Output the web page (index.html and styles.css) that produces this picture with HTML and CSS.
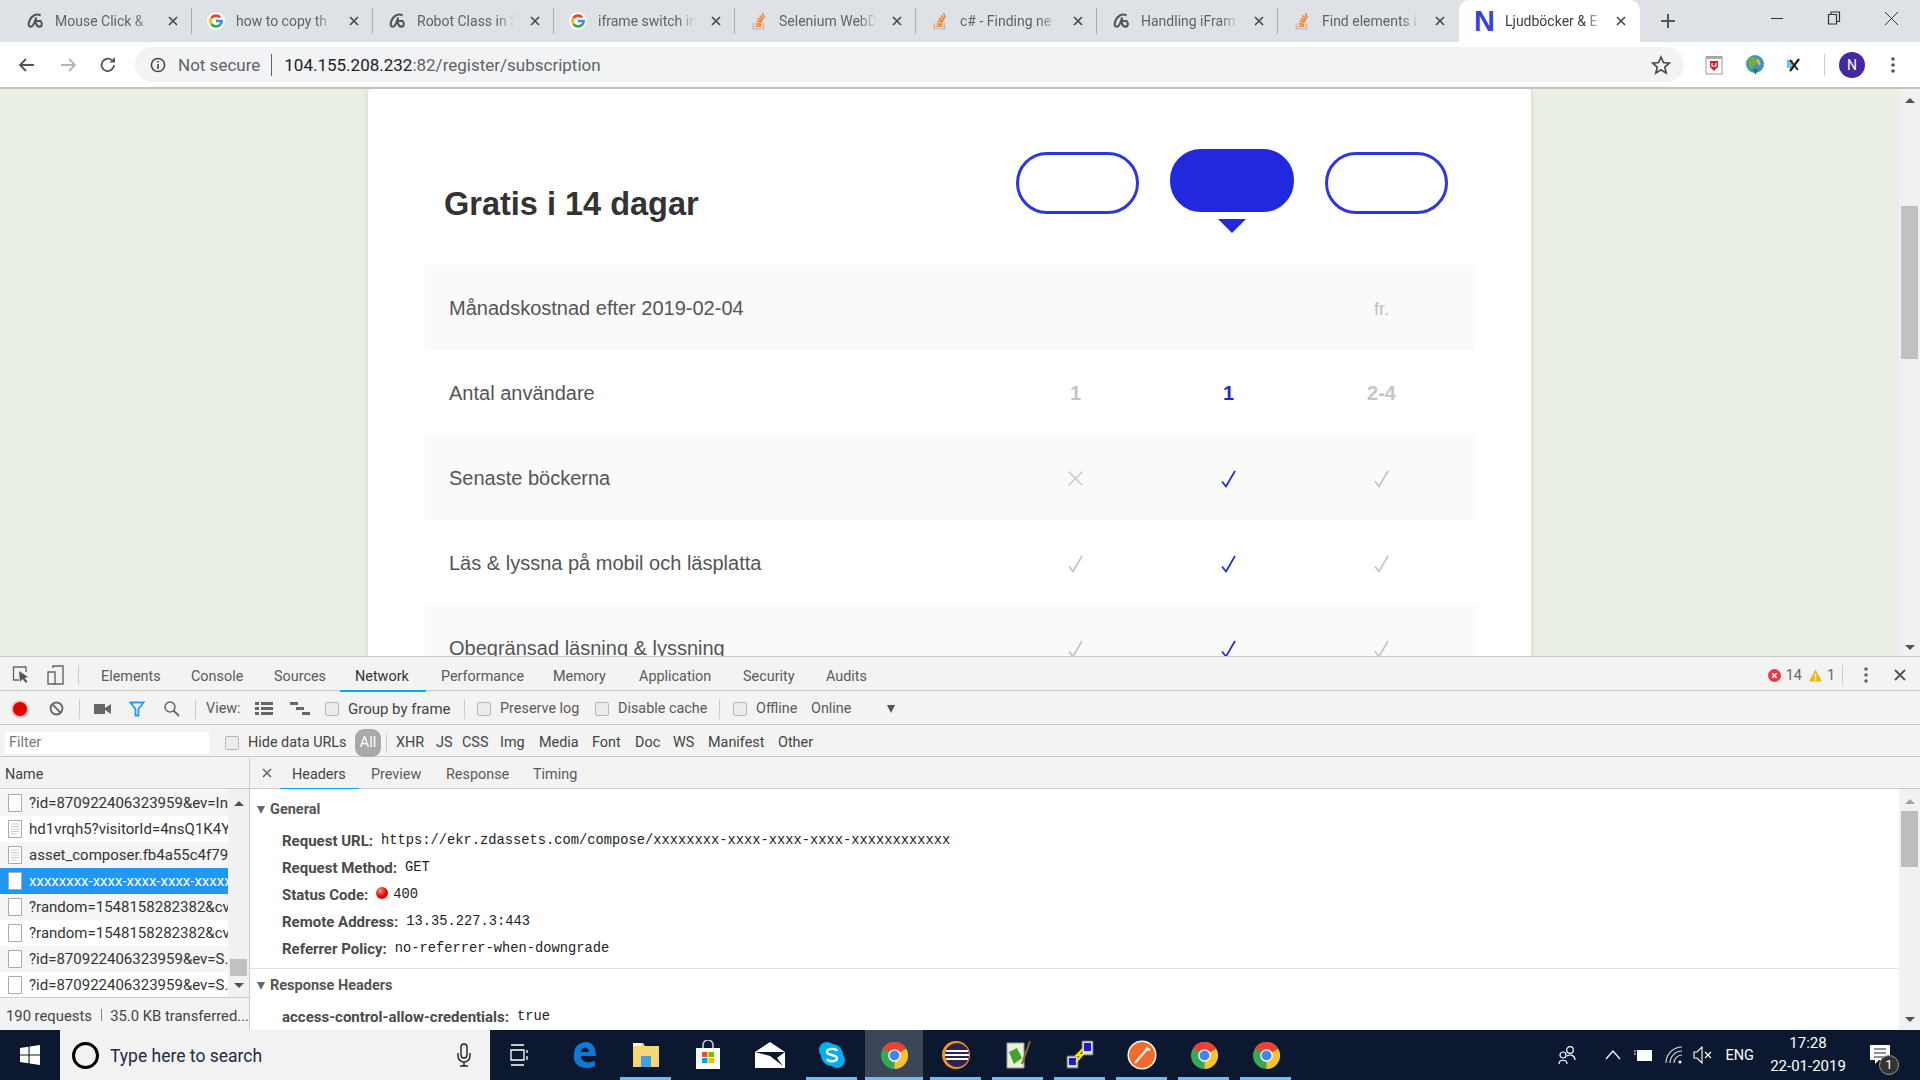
FILE: index.html
```html
<!DOCTYPE html>
<html lang="en">
<head>
    <meta charset="UTF-8">
    <title>Ljudböcker &amp; E-böcker</title>
    <link rel="stylesheet" href="styles.css">
</head>
<body>
    <!-- Shared icons -->
    <svg class="defs" width="0" height="0">
        <symbol id="i-swirl" viewBox="0 0 16 16"><path d="M13 3 C9 1 5 3 3 8 C1 13 4 14 6 12 C8 10 8 7 9 5 C8 9 9 13 12 13 C14.500 13 14.500 10 13 8 H9.500" fill="none" stroke="#555" stroke-width="1.8"/></symbol>
        <symbol id="i-google" viewBox="0 0 16 16">
            <circle cx="8" cy="8" r="8" fill="#fff"/>
            <path d="M11.6 4.8 A5 5 0 0 0 3.9 5.4" fill="none" stroke="#ea4335" stroke-width="2.4"/>
            <path d="M3.9 5.4 A5 5 0 0 0 3.9 10.6" fill="none" stroke="#fbbc05" stroke-width="2.4"/>
            <path d="M3.9 10.6 A5 5 0 0 0 11.8 11.2" fill="none" stroke="#34a853" stroke-width="2.4"/>
            <path d="M8 8 H13 A5 5 0 0 1 11.8 11.2" fill="none" stroke="#4285f4" stroke-width="2.4"/>
        </symbol>
        <symbol id="i-stack" viewBox="0 0 16 16">
            <path d="M3 10 V15 H12 V10" fill="none" stroke="#bbb" stroke-width="1.3"/>
            <path d="M5 12.6 H10 M5.2 10.4 L10 11 M5.9 8 L10.4 9.2 M7 5.6 L11 8 M8.8 3.2 L11.8 6.8 M11.2 1 L12.6 5.4" stroke="#f48024" stroke-width="1.4" fill="none"/>
        </symbol>
        <symbol id="i-close" viewBox="0 0 10 10"><path d="M1 1 L9 9 M9 1 L1 9" stroke="#4a4a4a" stroke-width="1.7" fill="none"/></symbol>
        <symbol id="i-check" viewBox="0 0 15 18"><path d="M1 11.5 L5 16.5 L14 1" fill="none" stroke="currentColor" stroke-width="1.7"/></symbol>
        <symbol id="i-cross" viewBox="0 0 15 15"><path d="M.5 .5 L14.5 14.5 M14.5 .5 L.5 14.5" fill="none" stroke="currentColor" stroke-width="1.3"/></symbol>
        <symbol id="i-chrome" viewBox="0 0 24 24">
            <circle cx="12" cy="12" r="12" fill="#34a853"/>
            <path d="M12 12 L1.6 6 A12 12 0 0 1 22.4 6 Z" fill="#ea4335"/>
            <path d="M12 12 L22.4 6 A12 12 0 0 1 12 24 Z" fill="#fbc02d"/>
            <circle cx="12" cy="12" r="5.6" fill="#fff"/>
            <circle cx="12" cy="12" r="4.4" fill="#4285f4"/>
        </symbol>
        <symbol id="i-doc" viewBox="0 0 14 18"><path d="M.5 .5 H13.5 V17.5 H.5 Z" fill="#fff" stroke="#aaa"/></symbol>
        <symbol id="i-doc-lines" viewBox="0 0 14 18"><path d="M.5 .5 H13.5 V17.5 H.5 Z" fill="#fff" stroke="#aaa"/><path d="M3 4 H11 M3 6.5 H11 M3 9 H11 M3 11.5 H11 M3 14 H8" stroke="#ccc"/></symbol>
    </svg>

    <!-- Browser tabs -->
    <div class="tab-strip">
        <div class="tab"><svg class="fav" width="18" height="18"><use href="#i-swirl"/></svg><span class="tab-title">Mouse Click &amp;</span><svg class="tab-x" width="10" height="10"><use href="#i-close"/></svg></div>
        <div class="tab"><svg class="fav" width="18" height="18"><use href="#i-google"/></svg><span class="tab-title">how to copy th</span><svg class="tab-x" width="10" height="10"><use href="#i-close"/></svg></div>
        <div class="tab"><svg class="fav" width="18" height="18"><use href="#i-swirl"/></svg><span class="tab-title">Robot Class in S</span><svg class="tab-x" width="10" height="10"><use href="#i-close"/></svg></div>
        <div class="tab"><svg class="fav" width="18" height="18"><use href="#i-google"/></svg><span class="tab-title">iframe switch in</span><svg class="tab-x" width="10" height="10"><use href="#i-close"/></svg></div>
        <div class="tab"><svg class="fav" width="18" height="18"><use href="#i-stack"/></svg><span class="tab-title">Selenium WebD</span><svg class="tab-x" width="10" height="10"><use href="#i-close"/></svg></div>
        <div class="tab"><svg class="fav" width="18" height="18"><use href="#i-stack"/></svg><span class="tab-title">c# - Finding ne</span><svg class="tab-x" width="10" height="10"><use href="#i-close"/></svg></div>
        <div class="tab"><svg class="fav" width="18" height="18"><use href="#i-swirl"/></svg><span class="tab-title">Handling iFram</span><svg class="tab-x" width="10" height="10"><use href="#i-close"/></svg></div>
        <div class="tab tab-last"><svg class="fav" width="18" height="18"><use href="#i-stack"/></svg><span class="tab-title">Find elements i</span><svg class="tab-x" width="10" height="10"><use href="#i-close"/></svg></div>
        <div class="tab tab-active"><span class="fav-n">N</span><span class="tab-title">Ljudböcker &amp; E</span><svg class="tab-x" width="10" height="10"><use href="#i-close"/></svg></div>
        <div class="new-tab"><svg width="16" height="16" viewBox="0 0 16 16"><path d="M8 1 V15 M1 8 H15" stroke="#555" stroke-width="2"/></svg></div>
        <div class="win-controls">
            <svg width="14" height="14" viewBox="0 0 14 14"><path d="M1 7.5 H13" stroke="#333"/></svg>
            <svg width="14" height="14" viewBox="0 0 14 14"><path d="M1.5 3.500 H9.5 V13 H1.5 Z M4 3.500 V1 H12.5 V10.500 H9.5" fill="none" stroke="#333" stroke-width="1.2"/></svg>
            <svg width="15" height="15" viewBox="0 0 15 15"><path d="M1 1 L14 14 M14 1 L1 14" stroke="#333"/></svg>
        </div>
    </div>

    <!-- Address bar -->
    <div class="toolbar">
        <div class="nav-buttons">
            <svg width="18" height="16" viewBox="0 0 18 16"><path d="M16 8 H2 M8 2 L2 8 L8 14" fill="none" stroke="#555" stroke-width="1.8"/></svg>
            <svg width="18" height="16" viewBox="0 0 18 16"><path d="M2 8 H16 M10 2 L16 8 L10 14" fill="none" stroke="#b5b5b5" stroke-width="1.8"/></svg>
            <svg width="18" height="18" viewBox="0 0 18 18"><path d="M15 9 A6.2 6.2 0 1 1 13 4.3" fill="none" stroke="#555" stroke-width="1.8"/><path d="M10.5 6.5 H16 V1 Z" fill="#555"/></svg>
        </div>
        <div class="omnibox">
            <svg class="info-icon" width="16" height="16" viewBox="0 0 16 16"><circle cx="8" cy="8" r="6.6" fill="none" stroke="#444" stroke-width="1.5"/><path d="M8 7 V12 M8 4 V5.6" stroke="#444" stroke-width="1.6"/></svg>
            <span class="not-secure">Not secure</span>
            <span class="url"><b>104.155.208.232</b>:82/register/subscription</span>
            <svg class="star" width="20" height="20" viewBox="0 0 20 20"><path d="M10 2 L12.4 7.6 L18.4 8.1 L13.8 12.1 L15.2 18 L10 14.9 L4.8 18 L6.2 12.1 L1.6 8.1 L7.6 7.6 Z" fill="none" stroke="#444" stroke-width="1.6"/></svg>
        </div>
        <div class="extensions">
            <svg class="ext-shield" width="20" height="20" viewBox="0 0 20 20"><path d="M2 1.5 H18 V19 H2 Z" fill="#fff" stroke="#999"/><path d="M2 1.5 H18 V4 H2 Z" fill="#aaa"/><path d="M6 6 H14 V12 L10 16 L6 12 Z" fill="#c62828"/><path d="M8 8 V11 H12 V8" fill="none" stroke="#fff" stroke-width="1.2"/></svg>
            <svg class="ext-globe" width="20" height="22" viewBox="0 0 20 22"><circle cx="10" cy="10" r="9" fill="#3f8fd2"/><path d="M3 5 C7 1 12 3 13 8 C10 9 8 15 5 16 Z" fill="#6bb33a"/><path d="M12 4 C15 6 16 9 15 12 L12 9 Z" fill="#f0b429"/><path d="M8 15 H13 L10.5 21 Z" fill="#2e7d32"/></svg>
            <svg class="ext-x" width="18" height="16" viewBox="0 0 18 16"><path d="M2 3 H8 V11 H2" fill="#6fc3ea"/><path d="M5 14 L14 2" stroke="#222" stroke-width="2.4"/><path d="M5 3 L13 13" stroke="#222" stroke-width="2"/></svg>
            <span class="toolbar-sep"></span>
            <span class="avatar">N</span>
            <svg class="dots" width="4" height="16" viewBox="0 0 4 16"><circle cx="2" cy="2" r="1.8" fill="#555"/><circle cx="2" cy="8" r="1.8" fill="#555"/><circle cx="2" cy="14" r="1.8" fill="#555"/></svg>
        </div>
    </div>

    <!-- Page -->
    <div class="viewport">
        <div class="page">
            <div class="card">
                <div class="card-head">
                    <h1>Gratis i 14 dagar</h1>
                    <div class="plans">
                        <div class="plan"></div>
                        <div class="plan plan-active"></div>
                        <div class="plan"></div>
                    </div>
                </div>
                <div class="row">
                    <span class="row-label">Månadskostnad efter 2019-02-04</span>
                    <span class="cell"></span>
                    <span class="cell"></span>
                    <span class="cell cell-fr">fr.</span>
                </div>
                <div class="row">
                    <span class="row-label">Antal användare</span>
                    <span class="cell cell-num">1</span>
                    <span class="cell cell-num cell-on">1</span>
                    <span class="cell cell-num">2-4</span>
                </div>
                <div class="row">
                    <span class="row-label">Senaste böckerna</span>
                    <span class="cell"><svg width="15" height="15"><use href="#i-cross"/></svg></span>
                    <span class="cell cell-on"><svg width="15" height="18"><use href="#i-check"/></svg></span>
                    <span class="cell"><svg width="15" height="18"><use href="#i-check"/></svg></span>
                </div>
                <div class="row">
                    <span class="row-label">Läs &amp; lyssna på mobil och läsplatta</span>
                    <span class="cell"><svg width="15" height="18"><use href="#i-check"/></svg></span>
                    <span class="cell cell-on"><svg width="15" height="18"><use href="#i-check"/></svg></span>
                    <span class="cell"><svg width="15" height="18"><use href="#i-check"/></svg></span>
                </div>
                <div class="row">
                    <span class="row-label">Obegränsad läsning &amp; lyssning</span>
                    <span class="cell"><svg width="15" height="18"><use href="#i-check"/></svg></span>
                    <span class="cell cell-on"><svg width="15" height="18"><use href="#i-check"/></svg></span>
                    <span class="cell"><svg width="15" height="18"><use href="#i-check"/></svg></span>
                </div>
            </div>
        </div>
        <div class="scrollbar page-scroll">
            <span class="arrow-up"></span>
            <span class="page-thumb"></span>
            <span class="arrow-down"></span>
        </div>
    </div>

    <!-- DevTools -->
    <div class="devtools">
        <div class="dt-tabs">
            <div class="dt-tools">
                <svg width="18" height="20" viewBox="0 0 18 20"><path d="M7 15 H1.5 V2 H14 V7" fill="none" stroke="#666" stroke-width="1.3"/><path d="M7 6 L8 17 L10.5 14 L14 18 L15.5 16.5 L12.5 13 L16 12 Z" fill="#555"/></svg>
                <svg width="18" height="20" viewBox="0 0 18 20"><path d="M6 3 V1 H16 V19 H6" fill="none" stroke="#666" stroke-width="1.4"/><path d="M1 7 H8 V19 H1 Z" fill="none" stroke="#666" stroke-width="1.4"/></svg>
                <span class="dt-sep"></span>
            </div>
            <div class="dt-tab-list">
                <span class="dt-tab">Elements</span>
                <span class="dt-tab">Console</span>
                <span class="dt-tab">Sources</span>
                <span class="dt-tab dt-tab-on">Network</span>
                <span class="dt-tab">Performance</span>
                <span class="dt-tab">Memory</span>
                <span class="dt-tab">Application</span>
                <span class="dt-tab">Security</span>
                <span class="dt-tab">Audits</span>
            </div>
            <div class="dt-status">
                <svg width="13" height="13" viewBox="0 0 13 13"><circle cx="6.5" cy="6.5" r="6.5" fill="#e53c46"/><path d="M4.3 4.3 L8.7 8.7 M8.7 4.3 L4.3 8.7" stroke="#fff" stroke-width="1.6"/></svg>
                <span class="dt-count">14</span>
                <svg width="13" height="13" viewBox="0 0 13 13"><path d="M6.5 .5 L13 12.5 H0 Z" fill="#f2b50f"/><path d="M6.5 4.5 V9 M6.5 10 V11.5" stroke="#fff" stroke-width="1.5"/></svg>
                <span class="dt-count">1</span>
                <span class="dt-sep"></span>
                <svg class="dt-more" width="4" height="16" viewBox="0 0 4 16"><circle cx="2" cy="2" r="1.8" fill="#666"/><circle cx="2" cy="8" r="1.8" fill="#666"/><circle cx="2" cy="14" r="1.8" fill="#666"/></svg>
                <svg class="dt-close" width="12" height="12" viewBox="0 0 12 12"><path d="M1 1 L11 11 M11 1 L1 11" stroke="#555" stroke-width="1.9"/></svg>
            </div>
        </div>

        <div class="net-bar">
            <span class="net-cell"><span class="record"></span></span>
            <span class="net-cell"><svg width="15" height="15" viewBox="0 0 15 15"><circle cx="7.5" cy="7.5" r="6" fill="none" stroke="#666" stroke-width="1.8"/><path d="M3.4 3.4 L11.6 11.6" stroke="#666" stroke-width="1.8"/></svg></span>
            <span class="net-cell"><span class="dt-sep"></span></span>
            <span class="net-cell"><svg width="17" height="12" viewBox="0 0 17 12"><path d="M0 1 H11 V11 H0 Z M11 5 L17 1 V11 L11 7 Z" fill="#666"/></svg></span>
            <span class="net-cell"><svg width="16" height="16" viewBox="0 0 16 16"><path d="M1.5 1.5 H14.5 L9.5 8 V14.5 H6.5 V8 Z" fill="none" stroke="#1f9bea" stroke-width="1.8"/></svg></span>
            <span class="net-cell"><svg width="17" height="17" viewBox="0 0 17 17"><circle cx="7" cy="7" r="5" fill="none" stroke="#666" stroke-width="1.5"/><path d="M10.5 10.5 L16 16" stroke="#666" stroke-width="1.8"/></svg></span>
            <span class="net-cell"><span class="dt-sep"></span></span>
            <span class="net-text">View:</span>
            <span class="net-cell"><svg width="18" height="13" viewBox="0 0 18 13"><path d="M0 0 H4 V3 H0 Z M6 0 H18 V3 H6 Z M0 5 H4 V8 H0 Z M6 5 H18 V8 H6 Z M0 10 H4 V13 H0 Z M6 10 H18 V13 H6 Z" fill="#666"/></svg></span>
            <span class="net-cell"><svg width="20" height="13" viewBox="0 0 20 13"><path d="M0 0 H8 V3 H0 Z M6 5 H14 V8 H6 Z M12 10 H20 V13 H12 Z" fill="#666"/></svg></span>
            <label class="check check-group"><span class="box"></span>Group by frame</label>
            <span class="net-cell"><span class="dt-sep"></span></span>
            <label class="check check-preserve"><span class="box"></span>Preserve log</label>
            <label class="check"><span class="box"></span>Disable cache</label>
            <span class="net-cell"><span class="dt-sep"></span></span>
            <label class="check check-offline"><span class="box"></span>Offline</label>
            <span class="net-online">Online</span>
            <span class="net-caret"></span>
        </div>

        <div class="filter-bar">
            <span class="filter-input">Filter</span>
            <label class="check check-hide"><span class="box"></span>Hide data URLs</label>
            <span class="filter-all">All</span>
            <span class="filter-sep"></span>
            <div class="filter-types">
                <span>XHR</span><span>JS</span><span>CSS</span><span>Img</span><span>Media</span><span>Font</span><span>Doc</span><span>WS</span><span>Manifest</span><span>Other</span>
            </div>
        </div>

        <div class="net-main">
            <div class="req-pane">
                <div class="req-head">Name</div>
                <div class="req-body">
                    <div class="req-list">
                        <div class="req"><svg width="14" height="18"><use href="#i-doc"/></svg><span>?id=870922406323959&amp;ev=In</span></div>
                        <div class="req"><svg width="14" height="18"><use href="#i-doc-lines"/></svg><span>hd1vrqh5?visitorId=4nsQ1K4Y</span></div>
                        <div class="req"><svg width="14" height="18"><use href="#i-doc-lines"/></svg><span>asset_composer.fb4a55c4f794.</span></div>
                        <div class="req req-on"><svg width="14" height="18"><use href="#i-doc"/></svg><span>xxxxxxxx-xxxx-xxxx-xxxx-xxxxxx</span></div>
                        <div class="req"><svg width="14" height="18"><use href="#i-doc"/></svg><span>?random=1548158282382&amp;cv</span></div>
                        <div class="req"><svg width="14" height="18"><use href="#i-doc"/></svg><span>?random=1548158282382&amp;cv</span></div>
                        <div class="req"><svg width="14" height="18"><use href="#i-doc"/></svg><span>?id=870922406323959&amp;ev=S.</span></div>
                        <div class="req"><svg width="14" height="18"><use href="#i-doc"/></svg><span>?id=870922406323959&amp;ev=S.</span></div>
                    </div>
                    <div class="scrollbar req-scroll">
                        <span class="arrow-up"></span>
                        <span class="req-thumb"></span>
                        <span class="arrow-down"></span>
                    </div>
                </div>
                <div class="req-foot">190 requests <i></i> 35.0 KB transferred...</div>
            </div>
            <div class="detail-pane">
                <div class="detail-tabs">
                    <svg class="detail-x" width="10" height="10" viewBox="0 0 10 10"><path d="M1 1 L9 9 M9 1 L1 9" stroke="#666" stroke-width="1.6"/></svg>
                    <div class="detail-tab-list">
                        <span class="detail-tab detail-tab-on">Headers</span>
                        <span class="detail-tab">Preview</span>
                        <span class="detail-tab">Response</span>
                        <span class="detail-tab">Timing</span>
                    </div>
                </div>
                <div class="detail-body">
                    <div class="detail-scrollarea">
                        <div class="section">
                            <div class="section-title">General</div>
                            <div class="kv"><b>Request URL:</b><code>https://ekr.zdassets.com/compose/xxxxxxxx-xxxx-xxxx-xxxx-xxxxxxxxxxxx</code></div>
                            <div class="kv"><b>Request Method:</b><code>GET</code></div>
                            <div class="kv"><b>Status Code:</b><span class="status-dot"></span><code>400</code></div>
                            <div class="kv"><b>Remote Address:</b><code>13.35.227.3:443</code></div>
                            <div class="kv"><b>Referrer Policy:</b><code>no-referrer-when-downgrade</code></div>
                        </div>
                        <div class="section section-next">
                            <div class="section-title">Response Headers</div>
                            <div class="kv kv-first"><b>access-control-allow-credentials:</b><code>true</code></div>
                        </div>
                    </div>
                    <div class="scrollbar detail-scroll">
                        <span class="arrow-up"></span>
                        <span class="detail-thumb"></span>
                        <span class="arrow-down"></span>
                    </div>
                </div>
            </div>
        </div>
    </div>

    <!-- Windows taskbar -->
    <div class="taskbar">
        <div class="start"><svg width="20" height="20" viewBox="0 0 20 20"><path d="M0 3 L8.5 1.8 V9.4 H0 Z M9.6 1.6 L20 0 V9.4 H9.6 Z M0 10.6 H8.5 V18.2 L0 17 Z M9.6 10.6 H20 V20 L9.6 18.4 Z" fill="#fff"/></svg></div>
        <div class="search">
            <span class="cortana"></span>
            <span class="search-text">Type here to search</span>
            <svg class="mic" width="16" height="24" viewBox="0 0 16 24"><rect x="5" y="1" width="6" height="14" rx="3" fill="none" stroke="#222" stroke-width="1.4"/><path d="M2 10 V13 A6 6 0 0 0 14 13 V10 M8 19 V23 M4 23 H12" fill="none" stroke="#222" stroke-width="1.4"/></svg>
        </div>
        <div class="task-apps">
            <span class="app app-plain"><svg class="task-view" width="20" height="22" viewBox="0 0 20 22"><path d="M3 1 H16 M3 21 H16 M3 6 H16 V16 H3 Z M19 6 V9 M19 12 V16" fill="none" stroke="#fff" stroke-width="1.3"/></svg></span>
            <span class="app app-plain"><svg width="26" height="28" viewBox="0 0 26 28"><path d="M3 13 C3 5 9 1 15 1 C21 1 25 6 25 15 H10 C10 21 17 23 24 20 V25 C14 30 1 26 3 13 Z M10 11 H18 C18 6 11 5 10 11 Z" fill="#0f78d4"/></svg></span>
            <span class="app"><svg width="28" height="26" viewBox="0 0 28 26"><path d="M1 1 H11 L13 4 H27 V25 H1 Z" fill="#f7d774"/><path d="M9 14 H19 V25 H9 Z" fill="#3fa2e0"/><path d="M1 1 H9 V4 H1 Z" fill="#fff"/></svg></span>
            <span class="app app-plain"><svg width="30" height="30" viewBox="0 0 30 30"><path d="M10 8 V5 A5 5 0 0 1 20 5 V8" fill="none" stroke="#ccc" stroke-width="1.6"/><path d="M3 8 H27 V29 H3 Z" fill="#fff"/><path d="M9 12 H14.500 V17 H9 Z" fill="#f25022"/><path d="M15.500 12 H21 V17 H15.500 Z" fill="#7fba00"/><path d="M9 18 H14.500 V23 H9 Z" fill="#00a4ef"/><path d="M15.500 18 H21 V23 H15.500 Z" fill="#ffb900"/></svg></span>
            <span class="app app-plain"><svg width="30" height="26" viewBox="0 0 30 26"><path d="M0 10 L15 0 L30 10 V26 H0 Z" fill="#fff"/><path d="M0 10 L30 10 L22 16 L28 24 L15 14 Z" fill="#0c1830"/></svg></span>
            <span class="app"><svg width="28" height="28" viewBox="0 0 28 28"><circle cx="9" cy="9" r="8" fill="#00aff0"/><circle cx="19" cy="19" r="8" fill="#00aff0"/><circle cx="14" cy="14" r="11" fill="#00aff0"/><path d="M19 10 C18 7 9 7 9 11 C9 15 19 13 19 17.500 C19 21 10 21 9 18" fill="none" stroke="#fff" stroke-width="2.4"/></svg></span>
            <span class="app app-active"><svg width="27" height="27"><use href="#i-chrome"/></svg></span>
            <span class="app"><svg width="28" height="28" viewBox="0 0 28 28"><circle cx="14" cy="14" r="14" fill="#f7941e"/><circle cx="15" cy="14" r="12" fill="#2c2255"/><path d="M4 10 H26 M3 14 H27 M4 18 H26" stroke="#fff" stroke-width="2"/></svg></span>
            <span class="app"><svg width="26" height="30" viewBox="0 0 26 30"><path d="M2 3 H19 V28 H2 Z" fill="#e8f0d8" stroke="#999"/><path d="M4 12 L12 8 L17 18 L9 24 Z" fill="#4aa02c"/><path d="M17 24 L25 1" stroke="#8a6d1f" stroke-width="2"/></svg></span>
            <span class="app"><svg width="30" height="30" viewBox="0 0 30 30"><path d="M17 1 H28 V15 H17 Z" fill="#dde" stroke="#666"/><path d="M19 3 H26 V11 H19 Z" fill="#1a1ac8"/><path d="M2 16 H13 V28 H2 Z" fill="#dde" stroke="#666"/><path d="M4 18 H11 V25 H4 Z" fill="#1a1ac8"/><path d="M18 9 L12 15 H17 L11 22" fill="none" stroke="#ffe100" stroke-width="2.4"/></svg></span>
            <span class="app"><svg width="30" height="30" viewBox="0 0 30 30"><circle cx="15" cy="15" r="14.500" fill="#fff"/><circle cx="15" cy="15" r="13" fill="#f26b2d"/><path d="M8 23 L21 8 M19 8 L23 10" stroke="#fff" stroke-width="2"/></svg></span>
            <span class="app"><svg width="27" height="27"><use href="#i-chrome"/></svg></span>
            <span class="app"><svg width="27" height="27"><use href="#i-chrome"/></svg></span>
        </div>
        <div class="tray">
            <svg class="tray-people" width="18" height="20" viewBox="0 0 18 20"><circle cx="12" cy="5" r="3.300" fill="none" stroke="#fff" stroke-width="1.2"/><circle cx="5" cy="10" r="3" fill="none" stroke="#fff" stroke-width="1.2"/><path d="M1 19 C1 14 9 14 9 19 M9 11 C12 9 17 10 17 15" fill="none" stroke="#fff" stroke-width="1.2"/></svg>
            <svg class="tray-chev" width="16" height="10" viewBox="0 0 16 10"><path d="M1 9 L8 1 L15 9" fill="none" stroke="#fff" stroke-width="1.2"/></svg>
            <svg class="tray-batt" width="20" height="14" viewBox="0 0 20 14"><path d="M1 3 H3 M1 6 H3" stroke="#fff"/><path d="M4 2 H19 V13 H4 Z" fill="#fff"/></svg>
            <svg class="tray-wifi" width="18" height="18" viewBox="0 0 18 18"><path d="M1 17 A16 16 0 0 1 17 1 M5 17 A12 12 0 0 1 17 5 M9 17 A8 8 0 0 1 17 9" fill="none" stroke="#ddd" stroke-width="1.1"/><circle cx="15" cy="16" r="1.500" fill="#fff"/></svg>
            <svg class="tray-sound" width="20" height="18" viewBox="0 0 20 18"><path d="M1 6 H4 L9 1 V17 L4 12 H1 Z" fill="none" stroke="#fff" stroke-width="1.1"/><path d="M12 6 L18 12 M18 6 L12 12" stroke="#fff" stroke-width="1.1"/></svg>
            <span class="tray-lang">ENG</span>
            <div class="clock"><span>17:28</span><span>22-01-2019</span></div>
            <div class="notif">
                <svg width="20" height="20" viewBox="0 0 20 20"><path d="M0 0 H20 V15 H9 L5 19 V15 H0 Z" fill="#fff"/><path d="M4 4 H16 M4 8 H16 M4 12 H16" stroke="#222"/></svg>
                <span class="notif-badge">1</span>
            </div>
        </div>
    </div>
</body>
</html>
```
FILE: styles.css
```css
* {
    box-sizing: border-box;
}

body {
    margin: 0;
    width: 1920px;
    height: 1080px;
    overflow: hidden;
    display: flex;
    flex-direction: column;
    font-family: Roboto, "Liberation Sans", sans-serif;
    background: #fff;
}

.defs {
    position: absolute;
}

/* Browser tabs */
.tab-strip {
    height: 42px;
    display: flex;
    background: #dee1e6;
    padding-left: 11px;
    color: #5f6368;
    font-size: 14px;
}

.tab {
    width: 181px;
    height: 42px;
    display: flex;
    align-items: center;
    padding-left: 15px;
    position: relative;
    border-right: 1px solid #a9acb0;
    border-image: linear-gradient(transparent 20%, #a9acb0 20%, #a9acb0 80%, transparent 80%) 1;
}

.tab-last,
.tab-active {
    border-right: none;
    border-image: none;
}

.tab-active {
    background: #fff;
    border-radius: 10px 10px 0 0;
    color: #3c4043;
}

.fav {
    flex: none;
    margin-right: 11px;
}

.fav-n {
    width: 20px;
    margin-right: 11px;
    font: bold 29px "Liberation Sans", sans-serif;
    color: #3a3fe0;
    line-height: 30px;
}

.tab-title {
    width: 102px;
    overflow: hidden;
    white-space: nowrap;
    -webkit-mask-image: linear-gradient(to right, #000 78%, transparent 96%);
    mask-image: linear-gradient(to right, #000 78%, transparent 96%);
}

.tab-x {
    margin-left: 11px;
    flex: none;
}

.tab-active .tab-x {
    margin-left: 9px;
}

.new-tab {
    width: 56px;
    display: flex;
    align-items: center;
    justify-content: center;
}

.win-controls {
    margin-left: auto;
    width: 170px;
    display: flex;
    align-items: center;
    justify-content: space-between;
    padding: 0 21px 6px 20px;
}

/* Address bar */
.toolbar {
    height: 47px;
    display: flex;
    align-items: center;
    background: #fff;
    border-bottom: 2px solid #c3c3c3;
}

.nav-buttons {
    width: 135px;
    display: flex;
    align-items: center;
    padding-left: 18px;
    gap: 22.5px;
}

.omnibox {
    width: 1549px;
    height: 35px;
    border-radius: 18px;
    background: #f1f3f4;
    display: flex;
    align-items: center;
    padding-left: 15px;
    font-size: 17px;
    color: #5f6368;
}

.not-secure {
    margin-left: 12px;
    padding-right: 11px;
    border-right: 1px solid #5f6368;
    line-height: 22px;
}

.url {
    margin-left: 12px;
    color: #5f6368;
}

.url b {
    font-weight: 400;
    color: #202124;
}

.star {
    margin-left: auto;
    margin-right: 13px;
}

.extensions {
    flex: 1;
    display: flex;
    align-items: center;
}

.ext-shield {
    margin-left: 20px;
}

.ext-globe {
    margin-left: 21px;
}

.ext-x {
    margin-left: 20px;
}

.toolbar-sep {
    width: 1px;
    height: 22px;
    background: #ccc;
    margin-left: 21px;
}

.avatar {
    width: 26px;
    height: 26px;
    margin-left: 14px;
    border-radius: 50%;
    background: #4527a0;
    color: #fff;
    font-size: 14px;
    text-align: center;
    line-height: 26px;
}

.dots {
    margin-left: 26px;
}

/* Page */
.viewport {
    height: 567px;
    display: flex;
    overflow: hidden;
    background: #e9efe2;
}

.page {
    flex: 1;
    display: flex;
    justify-content: center;
    font-family: "Liberation Sans", Arial, sans-serif;
}

.card {
    width: 1163px;
    height: 700px;
    padding: 0 56px 0 57px;
    background: #fff;
    box-shadow: 0 0 6px rgba(0, 0, 0, 0.1);
    border-radius: 4px;
}

.card-head {
    height: 176px;
    display: flex;
    justify-content: space-between;
    padding: 0 27px 0 19px;
}

.card-head h1 {
    margin: 95px 0 0;
    font-size: 32.5px;
    line-height: 40px;
    color: #333;
}

.plans {
    display: flex;
    gap: 31px;
    padding-top: 63px;
}

.plan {
    width: 123px;
    height: 62px;
    border: 3px solid #2f36e0;
    border-radius: 31px;
}

.plan-active {
    width: 124px;
    height: 63px;
    margin-top: -3px;
    background: #2228dc;
    border-color: #2228dc;
    position: relative;
}

.plan-active::after {
    content: "";
    position: absolute;
    left: 45px;
    top: 67px;
    border-style: solid;
    border-width: 14px 14px 0;
    border-color: #2228dc transparent transparent;
}

.row {
    height: 85px;
    display: grid;
    grid-template-columns: 1fr 153px 153px 153px;
    align-items: center;
    padding: 2px 17px 0 24px;
}

.row:nth-child(even) {
    background: #fafafa;
}

.row-label {
    font-size: 20px;
    color: #555;
}

.cell {
    display: flex;
    justify-content: center;
    color: #c4c4c4;
    font-size: 20px;
}

.cell-fr {
    padding-top: 2px;
    font-size: 18px;
    color: #c0c0c0;
}

.cell-num {
    font-weight: bold;
}

.cell-on {
    color: #2228dc;
}

.scrollbar {
    display: flex;
    flex-direction: column;
    align-items: center;
    background: #f1f1f1;
}

.arrow-up,
.arrow-down {
    width: 0;
    height: 0;
    border-style: solid;
    border-color: transparent;
}

.arrow-up {
    border-width: 0 5px 5px;
    border-bottom-color: #505050;
}

.arrow-down {
    border-width: 5px 5px 0;
    border-top-color: #505050;
}

.page-scroll {
    width: 21px;
    padding: 9px 0 6px;
    justify-content: space-between;
}

.page-thumb {
    width: 17px;
    height: 153px;
    margin: 103px 0 auto;
    background: #c1c1c1;
}

/* DevTools */
.devtools {
    height: 374px;
    display: flex;
    flex-direction: column;
    background: #f3f3f3;
    border-top: 1px solid #ccc;
    color: #444;
    font-size: 14.4px;
}

.dt-tabs {
    height: 34px;
    display: flex;
    align-items: center;
    border-bottom: 1px solid #ccc;
    flex: none;
}

.dt-tools {
    width: 86px;
    display: flex;
    align-items: center;
    gap: 17px;
    padding: 3px 0 0 12px;
}

.dt-tools .dt-sep {
    margin-left: -4px;
}

.dt-sep {
    display: block;
    width: 1px;
    height: 20px;
    background: #ccc;
}

.dt-tab-list {
    display: grid;
    grid-template-columns: 90px 83px 81px 86px 112px 86px 104px 83px auto;
    height: 33px;
}

.dt-tab {
    padding: 6px 15px 0;
    line-height: 27px;
    white-space: nowrap;
    color: #5a5a5a;
}

.dt-tab-on {
    color: #333;
    border-bottom: 2px solid #03a9f4;
}

.dt-status {
    margin-left: auto;
    display: flex;
    align-items: center;
    padding: 3px 14px 0 0;
    color: #666;
}

.dt-count {
    margin: 0 7px 0 5px;
}

.dt-more {
    margin-left: 21px;
}

.dt-close {
    margin-left: 26px;
}

.net-bar {
    height: 34px;
    flex: none;
    display: flex;
    align-items: center;
    border-bottom: 1px solid #ccc;
    padding-top: 2px;
}

.net-cell {
    display: flex;
    justify-content: center;
    align-items: center;
}

.net-cell:nth-child(1) { width: 40px; }
.net-cell:nth-child(2) { width: 32px; }
.net-cell:nth-child(3) { width: 14px; }
.net-cell:nth-child(4) { width: 32px; }
.net-cell:nth-child(5) { width: 38px; }
.net-cell:nth-child(6) { width: 30px; }
.net-cell:nth-child(7) { width: 18px; }
.net-cell:nth-child(9) { width: 32px; }
.net-cell:nth-child(10) { width: 40px; }
.net-cell:nth-child(12) { width: 1px; }
.net-cell:nth-child(15) { width: 1px; }

.record {
    display: block;
    width: 14px;
    height: 14px;
    border-radius: 50%;
    background: #e30000;
    box-shadow: 0 0 2px 1px rgba(227, 0, 0, 0.4);
}

.net-text {
    width: 44px;
    padding-left: 2px;
    color: #5a5a5a;
}

.check {
    display: flex;
    align-items: center;
    gap: 9px;
    white-space: nowrap;
    color: #5a5a5a;
    width: 124px;
}

.check-group {
    width: 144px;
    padding-left: 5px;
    color: #444;
    font-size: 15px;
}

.check-preserve {
    width: 130px;
    padding-left: 12px;
}

.check-offline {
    width: 85px;
    padding-left: 13px;
}

.check-hide {
    width: 130px;
    margin-left: 16px;
    color: #444;
}

.box {
    flex: none;
    width: 14px;
    height: 14px;
    border: 1px solid #b8b8b8;
    border-radius: 2px;
    background: #ececec;
}

.net-online {
    padding-left: 6px;
    width: 82px;
    color: #5a5a5a;
}

.net-caret {
    border-style: solid;
    border-width: 8px 4px 0;
    border-color: #555 transparent transparent;
}

.filter-bar {
    height: 32px;
    flex: none;
    display: flex;
    align-items: center;
    border-bottom: 1px solid #ccc;
    padding-top: 4px;
}

.filter-input {
    width: 204px;
    height: 22px;
    margin-left: 5px;
    padding-left: 4px;
    background: #fff;
    color: #777;
    line-height: 22px;
}

.filter-all {
    width: 26px;
    height: 28px;
    border-radius: 9px;
    background: #a9a9a9;
    color: #fff;
    text-align: center;
    line-height: 28px;
}

.filter-sep {
    width: 1px;
    height: 20px;
    margin-left: 5px;
    background: #ccc;
}

.filter-types {
    display: grid;
    grid-template-columns: 40px 26px 38px 39px 53px 43px 38px 35px 70px auto;
    margin-left: 9px;
    white-space: nowrap;
}

.net-main {
    flex: 1;
    display: flex;
    min-height: 0;
}

.req-pane {
    width: 250px;
    display: flex;
    flex-direction: column;
    border-right: 1px solid #ccc;
}

.req-head {
    height: 32px;
    padding: 4px 0 0 5px;
    line-height: 28px;
    border-bottom: 1px solid #ccc;
}

.req-body {
    height: 209px;
    display: flex;
    border-bottom: 1px solid #ccc;
    background: #fff;
}

.req-list {
    width: 228px;
    padding-top: 1px;
    overflow: hidden;
    font-size: 15px;
}

.req {
    height: 26px;
    display: flex;
    align-items: center;
    gap: 7px;
    padding-left: 8px;
    white-space: nowrap;
    overflow: hidden;
    color: #333;
}

.req:nth-child(odd) {
    background: #f5f5f5;
}

.req svg {
    flex: none;
}

.req-on {
    background: #2196f3;
    color: #fff;
}

.req-scroll {
    width: 21px;
    padding: 12px 0 9px;
    justify-content: space-between;
}

.req-thumb {
    width: 17px;
    height: 17px;
    margin-top: auto;
    margin-bottom: 7px;
    background: #c1c1c1;
}

.req-foot {
    flex: 1;
    padding-left: 6px;
    line-height: 36px;
    white-space: nowrap;
    overflow: hidden;
    font-size: 14.8px;
}

.req-foot i {
    display: inline-block;
    width: 1px;
    height: 12px;
    margin: 0 5px;
    background: #888;
}

.detail-pane {
    flex: 1;
    display: flex;
    flex-direction: column;
    min-width: 0;
}

.detail-tabs {
    height: 32px;
    flex: none;
    display: flex;
    align-items: center;
    border-bottom: 1px solid #ccc;
    padding-left: 12px;
}

.detail-x {
    margin-right: 8px;
}

.detail-tab-list {
    display: grid;
    grid-template-columns: 79px 75px 87px auto;
    height: 31px;
}

.detail-tab {
    padding: 4px 12px 0;
    line-height: 27px;
    color: #5a5a5a;
}

.detail-tab-on {
    color: #444;
    border-bottom: 2px solid #03a9f4;
}

.detail-body {
    flex: 1;
    display: flex;
    min-height: 0;
    background: #fff;
}

.detail-scrollarea {
    flex: 1;
    overflow: hidden;
}

.section {
    padding: 11px 0 0;
}

.section-next {
    border-top: 1px solid #e0e0e0;
    margin-top: 5.5px;
    padding-top: 7.5px;
}

.section-title {
    position: relative;
    padding-left: 20px;
    font-weight: 700;
    font-size: 14.5px;
    color: #555;
    line-height: 20px;
    height: 20px;
}

.section-title::before {
    content: "";
    position: absolute;
    left: 7px;
    top: 6px;
    border-style: solid;
    border-width: 8px 4px 0;
    border-color: #666 transparent transparent;
}

.kv {
    height: 27px;
    display: flex;
    align-items: center;
    padding-left: 32px;
    white-space: nowrap;
}

.kv:nth-child(2) {
    margin-top: 7px;
}

.kv b {
    font-size: 15px;
    font-weight: 700;
    color: #4a4a4a;
    margin-right: 8px;
}

.kv code {
    font-family: "Liberation Mono", monospace;
    font-size: 13.75px;
    color: #222;
}

.status-dot {
    width: 12px;
    height: 12px;
    border-radius: 50%;
    background: radial-gradient(circle at 35% 30%, #ff8a80, #e00000 55%);
    margin-right: 5px;
    margin-top: -3px;
}

.detail-scroll {
    width: 21px;
    padding: 10px 0 8px;
    justify-content: space-between;
}

.detail-scroll .arrow-up {
    border-bottom-color: #a3a3a3;
}

.detail-thumb {
    width: 17px;
    height: 56px;
    margin: 7px 0 auto;
    background: #bdbdbd;
}

/* Windows taskbar */
.taskbar {
    height: 50px;
    flex: none;
    display: flex;
    background: #0c1830;
    color: #fff;
}

.start {
    width: 60px;
    display: flex;
    align-items: center;
    justify-content: center;
}

.search {
    width: 430px;
    display: flex;
    align-items: center;
    background: #f2f2f2;
    color: #1e2b42;
    font-size: 17.5px;
    padding-left: 12px;
}

.cortana {
    width: 27px;
    height: 27px;
    border: 3px solid #000;
    border-radius: 50%;
}

.search-text {
    margin: 2px 0 0 11px;
}

.mic {
    margin-left: auto;
    margin-right: 18px;
}

.task-apps {
    display: flex;
    padding-left: 1px;
}

.task-view {
    margin-left: -8px;
}

.app {
    width: 62px;
    height: 50px;
    display: flex;
    align-items: center;
    justify-content: center;
    position: relative;
}

.app::after {
    content: "";
    position: absolute;
    left: 5px;
    right: 6px;
    bottom: 0;
    height: 3px;
    background: #76b9ed;
}

.app-plain::after {
    display: none;
}

.app-active {
    width: 58px;
    margin: 0 2px;
    background: #3d4656;
}

.app-active::after {
    left: 0;
    right: 0;
}

.tray {
    margin-left: auto;
    display: flex;
    align-items: center;
    font-size: 14.5px;
    padding-right: 14px;
}

.tray-chev {
    margin-left: 29px;
}

.tray-batt {
    margin-left: 12px;
}

.tray-wifi {
    margin-left: 12px;
}

.tray-sound {
    margin-left: 10px;
}

.tray-lang {
    margin-left: 13px;
}

.clock {
    width: 92px;
    margin-left: 8px;
    display: flex;
    flex-direction: column;
    align-items: center;
    gap: 6px;
    line-height: 17px;
    font-size: 15px;
}

.notif {
    width: 52px;
    display: flex;
    justify-content: center;
    position: relative;
}

.notif-badge {
    position: absolute;
    left: 25px;
    top: 10px;
    width: 20px;
    height: 20px;
    border: 1px solid #999;
    border-radius: 50%;
    background: #333;
    font-size: 13px;
    line-height: 18px;
    text-align: center;
}
```
